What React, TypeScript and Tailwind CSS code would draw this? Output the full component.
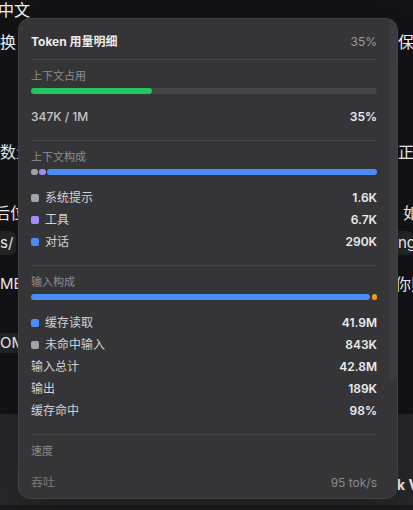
import React from 'react';

type RowProps = {
  label: string;
  value: string;
  dot?: string;
  labelClass?: string;
  valueClass?: string;
};

function Row({ label, value, dot, labelClass, valueClass }: RowProps) {
  return (
    <div className="flex h-[22px] items-center justify-between">
      <div className={`flex items-center gap-[6px] ${labelClass ?? 'text-[#d2d2d6]'}`}>
        {dot && <span className={`size-2 shrink-0 rounded-[2px] ${dot}`} />}
        <span>{label}</span>
      </div>
      <span className={valueClass ?? 'font-semibold text-[#ececee]'}>{value}</span>
    </div>
  );
}

function SectionLabel({ children }: { children: React.ReactNode }) {
  return <div className="mt-2 h-4 text-[11px] leading-4 text-[#8d8d92]">{children}</div>;
}

function Divider() {
  return <div className="mt-3 h-px bg-[#444447]" />;
}

const contextParts = [
  { label: '系统提示', value: '1.6K', dot: 'bg-[#a3a3aa]' },
  { label: '工具', value: '6.7K', dot: 'bg-[#a78bfa]' },
  { label: '对话', value: '290K', dot: 'bg-[#4b8df8]' },
];

const inputParts = [
  { label: '缓存读取', value: '41.9M', dot: 'bg-[#4b8df8]' },
  { label: '未命中输入', value: '843K', dot: 'bg-[#a3a3aa]' },
  { label: '输入总计', value: '42.8M' },
  { label: '输出', value: '189K' },
  { label: '缓存命中', value: '98%' },
];

function Backdrop() {
  return (
    <div className="flex flex-col text-[16px] leading-5 text-[#f2f2f2]">
      <div className="flex h-5 items-center whitespace-nowrap">
        <span className="-ml-[2px]">中文</span>
      </div>
      <div className="mt-[10px] flex h-6 items-center justify-between whitespace-nowrap">
        <span className="w-[18px] overflow-hidden">换；</span>
        <span className="w-[15px] overflow-hidden">保证</span>
      </div>
      <div className="mt-[86px] flex h-6 items-center justify-between whitespace-nowrap">
        <span className="w-[18px] overflow-hidden">数量</span>
        <span className="w-[15px] overflow-hidden">正T</span>
      </div>
      <div className="mt-[37px] flex h-6 items-center justify-between whitespace-nowrap">
        <span className="w-[18px] overflow-hidden">
          <span className="-ml-[6px] inline-block">后位</span>
        </span>
        <span className="w-[10px] overflow-hidden">如</span>
      </div>
      <div className="mt-[6px] flex h-6 items-center justify-between whitespace-nowrap">
        <span className="rounded-r-md bg-[#242427] py-[2px] pr-[3px] text-[15px]">s/</span>
        <span className="w-[15px] overflow-hidden rounded-r-md bg-[#242427] py-[2px] text-[15px]">ng</span>
      </div>
      <div className="mt-[17px] flex h-6 items-center justify-between whitespace-nowrap">
        <span className="w-[18px] overflow-hidden text-[15px]">
          ME <span className="text-[#3b82f6]">.</span>
        </span>
        <span className="w-[15px] overflow-hidden">
          <span className="-ml-[3px] inline-block">你则</span>
        </span>
      </div>
      <div className="mt-[37px] flex h-5 items-center whitespace-nowrap">
        <span className="w-[18px] overflow-hidden bg-[#242427] text-[15px]">OMI</span>
      </div>
      <div className="mt-[61px] flex h-[91px] items-center justify-end bg-[#27272a] pt-[50px] whitespace-nowrap">
        <span className="w-[15px] overflow-hidden text-[14px] font-bold text-[#e8e8e8]">
          <span className="-ml-[1px] inline-block">k V</span>
        </span>
      </div>
      <div className="h-[5px] bg-[#1a1a1c]" />
    </div>
  );
}

export default function App() {
  return (
    <div
      className="relative h-[510px] w-[413px] overflow-hidden bg-[#131316]"
      style={{ fontFamily: 'Inter, "Noto Sans CJK SC", sans-serif' }}
    >
      <Backdrop />

      {/* Token popover */}
      <div className="absolute left-[18px] top-[18px] h-[481px] w-[380px] overflow-hidden rounded-xl border border-[#414144] bg-[#353537] shadow-2xl">
        <div className="absolute right-0 top-0 h-[362px] w-2 rounded-full bg-[#3c3c3f]" />
        <div className="pl-3 pr-5 pt-[13px] text-[12px] leading-4">
          <div className="flex h-5 items-center justify-between">
            <span className="font-bold text-[#ebebed]">Token 用量明细</span>
            <span className="text-[#9b9b9f]">35%</span>
          </div>
          <div className="mt-[7px] h-px bg-[#444447]" />

          <SectionLabel>上下文占用</SectionLabel>
          <div className="mt-1 h-1.5 rounded-full bg-[#454548]">
            <div className="h-full w-[35%] rounded-full bg-[#22c55e]" />
          </div>
          <div className="mt-3">
            <Row label="347K / 1M" value="35%" labelClass="text-[#c6c6ca] font-medium" />
          </div>
          <Divider />

          <SectionLabel>上下文构成</SectionLabel>
          <div className="mt-1 flex h-1.5 gap-px">
            <div className="w-[7px] rounded-full bg-[#a3a3aa]" />
            <div className="w-[7px] rounded-full bg-[#a78bfa]" />
            <div className="flex-1 rounded-full bg-[#4b8df8]" />
          </div>
          <div className="mt-3">
            {contextParts.map(p => (
              <Row key={p.label} label={p.label} value={p.value} dot={p.dot} />
            ))}
          </div>
          <Divider />

          <SectionLabel>输入构成</SectionLabel>
          <div className="mt-1 flex h-1.5 gap-[2px]">
            <div className="flex-1 rounded-full bg-[#4b8df8]" />
            <div className="w-[5px] rounded-full bg-[#f59e0b]" />
          </div>
          <div className="mt-3">
            {inputParts.map(p => (
              <Row key={p.label} label={p.label} value={p.value} dot={p.dot} />
            ))}
          </div>
          <Divider />

          <SectionLabel>速度</SectionLabel>
          <div className="mt-[13px]">
            <Row
              label="吞吐"
              value="95 tok/s"
              labelClass="text-[#78787c]"
              valueClass="text-[#8a8a8e]"
            />
          </div>
        </div>
      </div>
    </div>
  );
}
